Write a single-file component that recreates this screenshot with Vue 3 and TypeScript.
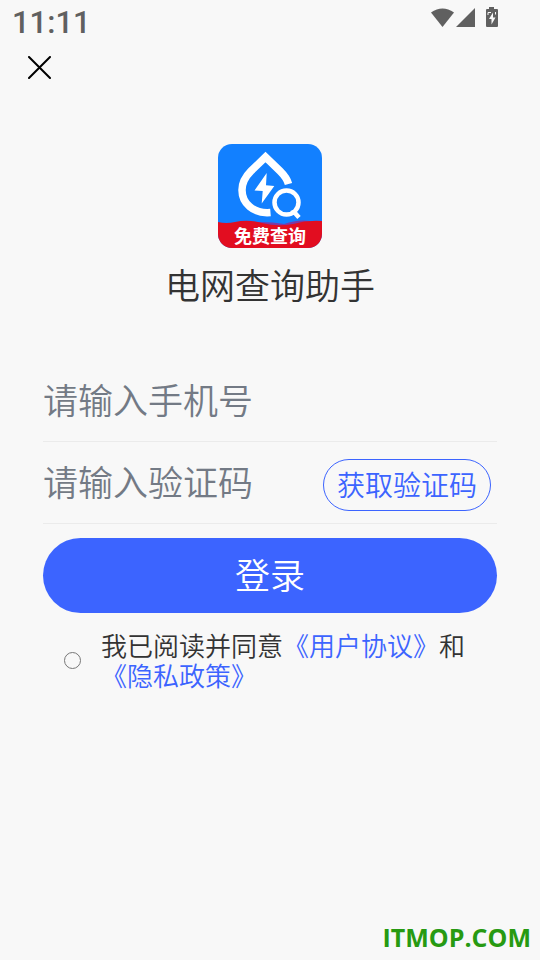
<script setup lang="ts">
import { ref } from 'vue'

const phone = ref('')
const code = ref('')
const agreed = ref(false)
</script>

<template>
  <div class="page">
    <header class="status">
      <span class="time">11:11</span>
      <svg class="status-icons" width="68" height="22" viewBox="0 0 68 22" aria-hidden="true">
        <path d="M1 5.500Q12.500 -2.500 24 5.500L12.500 20Z" fill="#606060" />
        <path d="M45 1V20H26Z" fill="#606060" />
        <path d="M59 0h5v2h3q1 0 1 1V19q0 1-1 1H57q-1 0-1-1V3q0-1 1-1h2Z" fill="#606060" />
        <path d="M63 5.500L59 12H61.500V17.500L65.500 10.500H63Z" fill="#f8f8f8" />
        <path d="M58 8V5.500H61M65.500 5v2.500" stroke="#f8f8f8" fill="none" />
      </svg>
    </header>

    <nav class="bar">
      <button class="close" type="button" aria-label="关闭">
        <svg width="23" height="23" viewBox="0 0 23 23">
          <path d="M1 1L22 22M22 1L1 22" stroke="#000" stroke-width="2" fill="none" stroke-linecap="round" />
        </svg>
      </button>
    </nav>

    <main class="content">
      <svg class="logo" width="104" height="104" viewBox="0 0 104 104">
        <defs>
          <clipPath id="logo-shape"><rect width="104" height="104" rx="14" /></clipPath>
        </defs>
        <g clip-path="url(#logo-shape)">
          <rect width="104" height="104" fill="#1280ff" />
          <path d="M40 78Q56 78 66 80Q80 75 92 77V86H40Z" fill="#7b3aa5" />
          <path d="M0 78Q8 80 17 78Q30 75 44 79Q60 83 75 80Q89 76 104 77V104H0Z" fill="#e20d20" />
          <path
            d="M70.500 40C69 34 66 31 62 27L47.500 13L33 27C27 33 24 38 24 46C24 59 35 70 52.500 68.500"
            stroke="#fff" stroke-width="7.500" fill="none"
          />
          <path d="M48.700 29L36.500 46.500L44.700 47L43.700 59.500L56.300 42L48 41.300Z" fill="#fff" />
          <circle cx="68.500" cy="58.500" r="12" stroke="#fff" stroke-width="4.500" fill="none" />
          <path d="M73 69L76.500 68.500L81 73.500" stroke="#fff" stroke-width="4.500" fill="none" />
          <text class="logo-text" x="52" y="99" text-anchor="middle">免费查询</text>
        </g>
      </svg>
      <h1 class="title">电网查询助手</h1>

      <form class="form" @submit.prevent>
        <div class="field">
          <input v-model="phone" class="input" type="tel" placeholder="请输入手机号" aria-label="手机号" />
        </div>
        <div class="field">
          <input v-model="code" class="input" type="text" placeholder="请输入验证码" aria-label="验证码" />
          <button class="get-code" type="button">获取验证码</button>
        </div>
        <button class="login" type="submit">登录</button>
        <div class="agreement">
          <input id="agree" v-model="agreed" class="check" type="checkbox" />
          <p class="terms">
            <label for="agree">我已阅读并同意</label><a href="#agreement">《用户协议》</a>和<a href="#privacy">《隐私政策》</a>
          </p>
        </div>
      </form>
    </main>

    <footer class="mark">ITMOP.COM</footer>
  </div>
</template>

<style>
body {
  margin: 0;
  background: #f8f8f8;
}
</style>

<style scoped>
.page {
  box-sizing: border-box;
  min-height: 100vh;
  display: flex;
  flex-direction: column;
  background: #f8f8f8;
  color: #333;
  font-family: Roboto, "Noto Sans CJK SC", sans-serif;
  font-weight: 350;
}

button,
input {
  font-family: inherit;
  font-weight: inherit;
}

.status {
  display: flex;
  justify-content: space-between;
  align-items: flex-start;
  height: 44px;
  padding: 7px 42px 0 12px;
  box-sizing: border-box;
}

.time {
  font: 500 31px/32px Roboto, sans-serif;
  color: #606060;
}

.bar {
  display: flex;
  padding: 8px 24px;
}

.close {
  display: flex;
  padding: 4px;
  border: 0;
  background: none;
}

.content {
  display: flex;
  flex-direction: column;
  align-items: center;
  padding: 53px 43px 0;
}

.logo {
  display: block;
}

.logo-text {
  font-size: 18px;
  font-weight: 700;
  fill: #fff;
}

.title {
  margin: 14px 0 0;
  font-size: 35px;
  line-height: 52px;
  font-weight: inherit;
}

.form {
  align-self: stretch;
  display: flex;
  flex-direction: column;
  margin-top: 46px;
}

.field {
  display: flex;
  align-items: flex-end;
  box-sizing: border-box;
  height: 82px;
  padding: 0 6px 12px 0;
  border-bottom: 1px solid #ebebeb;
}

.input {
  flex: 1;
  min-width: 0;
  height: 54px;
  padding: 0;
  border: 0;
  outline: 0;
  background: none;
  font-size: 35px;
  color: #333;
}

.input::placeholder {
  color: #737a85;
  opacity: 1;
}

.get-code {
  flex: none;
  height: 52px;
  padding: 4px 13px 0;
  border: 1px solid #3c64ff;
  border-radius: 26px;
  background: none;
  color: #3c64ff;
  font-size: 28px;
  line-height: 40px;
}

.login {
  height: 75px;
  margin-top: 14px;
  padding: 4px 0 0;
  border: 0;
  border-radius: 38px;
  background: #3c64ff;
  color: #fff;
  font-size: 35px;
  line-height: 52px;
}

.agreement {
  display: flex;
  align-items: flex-start;
  gap: 20px;
  margin-top: 19px;
  padding-left: 21px;
}

.check {
  flex: none;
  appearance: none;
  box-sizing: border-box;
  width: 17px;
  height: 17px;
  margin: 20px 0 0;
  border: 1px solid #777;
  border-radius: 50%;
}

.check:checked {
  border-color: #3c64ff;
  background: #3c64ff;
}

.terms {
  flex: 1;
  margin: 0;
  font-size: 26px;
  line-height: 30px;
}

.terms a {
  color: #3c64ff;
  text-decoration: none;
}

.mark {
  margin-top: auto;
  padding: 0 9px 6px 0;
  text-align: right;
  font: 700 25px/34px "Open Sans", sans-serif;
  color: #279a12;
}
</style>
